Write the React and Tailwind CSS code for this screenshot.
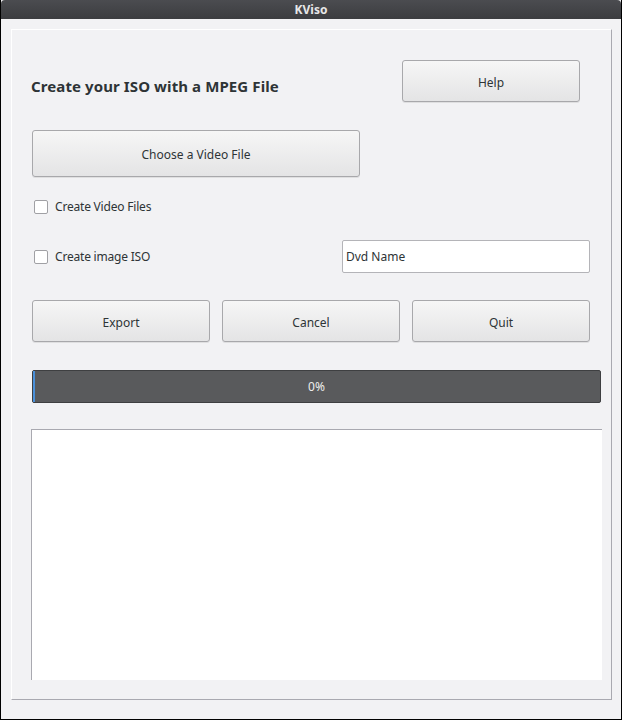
export default function App() {
  const font = { fontFamily: '"Noto Sans", "Open Sans", sans-serif' };

  const btn =
    "flex items-center justify-center pt-[3px] rounded-[3px] border border-[#a8a8ab] bg-gradient-to-b from-[#f6f6f6] to-[#e4e4e5] shadow-[0_1px_0_rgba(0,0,0,0.08)] text-[12px] text-[#2e3436]";

  return (
    <div
      className="w-[622px] h-[720px] bg-[#f2f2f4] border-x border-b border-black flex flex-col"
      style={font}
    >
      {/* title bar */}
      <div className="h-[19px] shrink-0 bg-gradient-to-b from-[#4b4c50] to-[#3c3d40] rounded-t-[4px] flex items-center justify-center">
        <span className="text-[12px] font-bold text-[#e8e8e8] leading-none">KViso</span>
      </div>

      <div className="pt-[10px] pl-[10px]">
        {/* frame */}
        <div className="w-[601px] h-[671px] border-t border-l border-white border-r border-b border-r-[#a9a9b0] border-b-[#a9a9b0] pl-[20px]">
          <div className="mt-[30px] flex items-start">
            <h1 className="mt-[16px] -ml-[1px] text-[15px] font-bold text-[#2e3436] leading-[20px] w-[371px] tracking-[0.1px]">
              Create your ISO with a MPEG File
            </h1>
            <button className={`${btn} w-[178px] h-[42px]`}>Help</button>
          </div>

          <button className={`${btn} mt-[28px] w-[328px] h-[47px]`}>Choose a Video File</button>

          <div className="mt-[20px] h-[20px] flex items-center gap-[7px] pl-[2px]">
            <span className="w-[14px] h-[14px] rounded-[2px] border border-[#a0a0a4] bg-white" />
            <span className="text-[12px] text-[#2e3436] tracking-[-0.2px]">Create Video Files</span>
          </div>

          <div className="mt-[23px] h-[33px] flex items-center">
            <div className="flex items-center gap-[7px] pl-[2px] w-[310px]">
              <span className="w-[14px] h-[14px] rounded-[2px] border border-[#a0a0a4] bg-white" />
              <span className="text-[12px] text-[#2e3436] tracking-[-0.2px]">Create image ISO</span>
            </div>
            <div className="w-[248px] h-[33px] rounded-[2px] border border-[#b4b4b8] bg-white flex items-center pl-[3px] text-[12px] text-[#2e3436]">
              Dvd Name
            </div>
          </div>

          <div className="mt-[27px] flex gap-[12px]">
            <button className={`${btn} w-[178px] h-[42px]`}>Export</button>
            <button className={`${btn} w-[178px] h-[42px]`}>Cancel</button>
            <button className={`${btn} w-[178px] h-[42px]`}>Quit</button>
          </div>

          <div className="mt-[28px] w-[569px] h-[33px] rounded-[2px] border border-[#3e3f41] bg-[#595a5c] flex items-center relative">
            <div className="absolute left-0 top-0 bottom-0 w-[2px] bg-[#4a90d9]" />
            <span className="w-full text-center text-[12px] text-[#eeeeec]">0%</span>
          </div>

          <div className="mt-[26px] ml-[-1px] w-[571px] h-[251px] bg-white border-t border-l border-[#a9a9b0]" />
        </div>
      </div>
    </div>
  );
}
